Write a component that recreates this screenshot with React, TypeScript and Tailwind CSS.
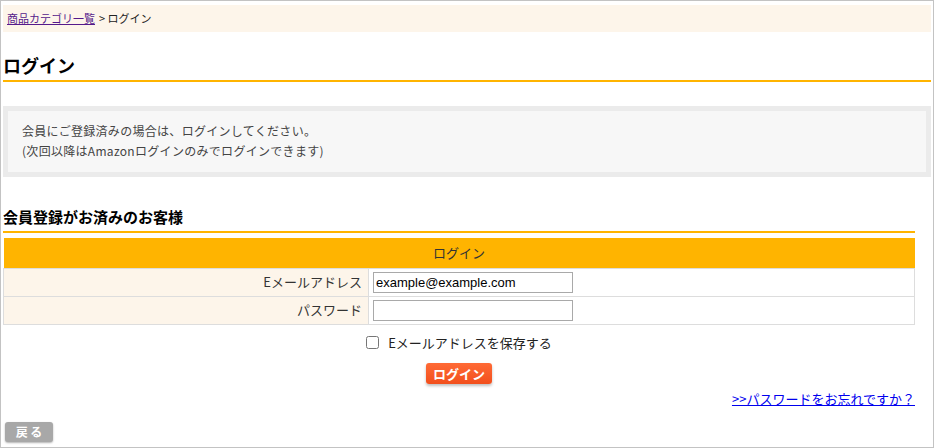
import React from "react";

const jp = { fontFamily: '"Noto Sans CJK JP", "Liberation Sans", sans-serif' };

const Row = ({ label, value }: { label: string; value?: string }) => (
  <tr className="h-[28px]">
    <td className="w-[365px] bg-[#fdf5ea] border border-[#dddddd] pr-[6px] text-right text-[13px] text-[#333]">
      {label}
    </td>
    <td className="border border-[#dddddd] pl-[4px] py-0">
      <input
        type="text"
        defaultValue={value}
        className="block w-[200px] h-[21px] border border-[#a9a9a9] px-[2px] text-[13px] text-black outline-none"
        style={{ fontFamily: '"Liberation Sans", sans-serif' }}
      />
    </td>
  </tr>
);

export default function App() {
  return (
    <div
      className="w-[934px] h-[448px] border border-[#c3c3c3] bg-white px-[2px] pt-[4px] text-[#333] overflow-hidden"
      style={jp}
    >
      {/* breadcrumb */}
      <div className="h-[27px] bg-[#fdf5ea] px-[4px] flex items-center text-[11px]">
        <a href="#" className="underline text-[#551a8b]">
          商品カテゴリ一覧
        </a>
        <span className="ml-[4px] text-[#222]">&gt; ログイン</span>
      </div>

      <h1 className="mt-[21px] text-[18px] leading-[24px] font-bold text-black pb-[3px] border-b-2 border-[#ffb400]">
        ログイン
      </h1>

      <div className="mt-[24px] border-[5px] border-[#ebebeb] bg-[#f7f7f7] pl-[14px] pt-[10px] pb-[11px] text-[12px] leading-[20px] tracking-[0.3px] text-[#444]">
        <p>会員にご登録済みの場合は、ログインしてください。</p>
        <p>(次回以降はAmazonログインのみでログインできます)</p>
      </div>

      <div className="w-[912px]">
        <h2 className="mt-[30px] text-[15px] leading-[20px] font-bold text-black pb-[4px] border-b-2 border-[#ffb400]">
          会員登録がお済みのお客様
        </h2>

        <table className="mt-[5px] w-full border-collapse">
          <thead>
            <tr className="h-[30px] bg-[#ffb400]">
              <th className="font-normal text-[13px] text-[#333]" colSpan={2}>
                ログイン
              </th>
            </tr>
          </thead>
          <tbody>
            <Row label="Eメールアドレス" value="example@example.com" />
            <Row label="パスワード" />
          </tbody>
        </table>

        <label className="mt-[8px] h-[20px] flex items-center justify-center text-[13px] text-[#222]">
          <input type="checkbox" className="w-[13px] h-[13px] mr-[9px]" />
          Eメールアドレスを保存する
        </label>

        <div className="mt-[10px] flex justify-center">
          <button className="w-[66px] h-[21px] rounded-[3px] bg-gradient-to-b from-[#ff6a35] to-[#f24f1c] text-white text-[13px] font-bold leading-[21px] shadow-[0_2px_3px_rgba(0,0,0,0.25)]">
            ログイン
          </button>
        </div>

        <div className="mt-[6px] flex justify-end">
          <a href="#" className="text-[13px] leading-[18px] underline text-[#0000ee]">
            &gt;&gt;パスワードをお忘れですか？
          </a>
        </div>
      </div>

      <button className="mt-[14px] ml-[2px] w-[48px] h-[20px] rounded-[3px] bg-[#a8a8a8] text-white text-[12px] font-bold leading-[20px] shadow-[0_1px_2px_rgba(0,0,0,0.3)]">
        戻 る
      </button>
    </div>
  );
}
